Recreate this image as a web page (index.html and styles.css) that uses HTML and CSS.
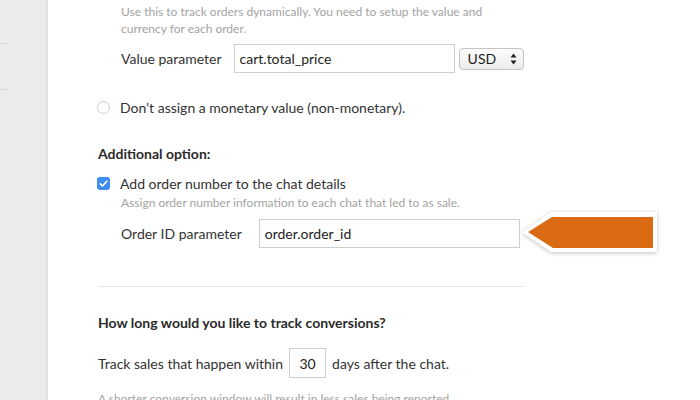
FILE: index.html
```html
<!DOCTYPE html>
<html>
<head>
<meta charset="utf-8">
<link rel="stylesheet" href="styles.css">
</head>
<body>
<div class="page">
  <aside class="sidebar">
    <div class="side-line first"></div>
    <div class="side-line second"></div>
  </aside>
  <main class="main">
    <div class="content">
      <p class="help indent">Use this to track orders dynamically. You need to setup the value and<br>currency for each order.</p>
      <div class="field-row indent value-row">
        <span class="label">Value parameter</span>
        <span class="text-input value-input">cart.total_price</span>
        <span class="select">USD<svg class="select-arrows" width="7" height="12" viewBox="0 0 7 12"><path d="M3.5 0.5 L6.5 4.5 L0.5 4.5 Z M3.5 11.5 L6.5 7.5 L0.5 7.5 Z" fill="#222"/></svg></span>
      </div>
      <div class="option radio-row">
        <span class="radio"></span>
        <span class="option-text">Don’t assign a monetary value (non-monetary).</span>
      </div>
      <h3 class="heading additional">Additional option:</h3>
      <div class="option check-row">
        <span class="checkbox"><svg width="13" height="13" viewBox="0 0 13 13"><path d="M3.3 6.8 L5.5 9 L9.8 4.2" fill="none" stroke="#fff" stroke-width="1.7" stroke-linecap="round" stroke-linejoin="round"/></svg></span>
        <span class="option-text">Add order number to the chat details</span>
      </div>
      <p class="help indent assign">Assign order number information to each chat that led to as sale.</p>
      <div class="field-row indent order-row">
        <span class="label order-label">Order ID parameter</span>
        <span class="text-input order-input">order.order_id</span>
        <svg class="pointer" width="142" height="48" viewBox="0 0 142 48">
          <polygon points="2,22.5 31,2 137,2 137,42 31,42" fill="#fff"/>
          <polygon points="8,22 32,7 133,7 133,38 33,38" fill="#da6a14"/>
        </svg>
      </div>
      <hr class="divider">
      <h3 class="heading how">How long would you like to track conversions?</h3>
      <div class="track-row">
        <span>Track sales that happen within</span>
        <span class="text-input days-input">30</span>
        <span>days after the chat.</span>
      </div>
      <p class="help shorter">A shorter conversion window will result in less sales being reported.</p>
    </div>
  </main>
</div>
</body>
</html>
```
FILE: styles.css
```css
* { box-sizing: border-box; }
html, body { margin: 0; padding: 0; background: #fff; }
body {
  font-family: Lato, "Open Sans", sans-serif;
  color: #333;
  width: 700px;
  height: 400px;
  overflow: hidden;
}
.page {
  display: flex;
  height: 400px;
}
.sidebar {
  width: 48px;
  flex: none;
  background: #ebebeb;
  border-right: 2px solid #e2e2e2;
  padding-top: 43px;
}
.side-line {
  width: 8px;
  height: 1px;
  background: #d9d9d9;
}
.side-line.second { margin-top: 45px; }
.main {
  flex: 1;
  padding-left: 50px;
  padding-top: 3px;
}
.content {
  width: 426px;
}
.indent { padding-left: 23px; }
.help {
  margin: 0;
  font-size: 12px;
  line-height: 17px;
  color: #a3a3a3;
  white-space: nowrap;
}
.field-row {
  display: flex;
  align-items: center;
  position: relative;
  white-space: nowrap;
}
.value-row { margin-top: 7px; }
.label {
  font-size: 14px;
  color: #333;
  flex: none;
}
.text-input {
  display: flex;
  align-items: center;
  flex: none;
  height: 29px;
  border: 1px solid #cfcfcf;
  background: #fff;
  font-size: 14px;
  color: #222;
  padding-left: 5px;
}
.value-input {
  width: 221px;
  margin-left: 12px;
}
.select {
  display: flex;
  align-items: center;
  justify-content: space-between;
  flex: none;
  width: 65px;
  height: 22px;
  margin-left: 4px;
  padding: 0 6px 0 8px;
  border: 1px solid #c4c4c4;
  border-radius: 4px;
  background: linear-gradient(#fdfdfd, #ececec);
  font-size: 14px;
  color: #222;
}
.option {
  display: flex;
  align-items: center;
  height: 20px;
  white-space: nowrap;
}
.option-text {
  font-size: 14px;
  color: #333;
  margin-left: 10px;
}
.radio-row { margin-top: 24px; }
.radio {
  width: 13px;
  height: 13px;
  border: 1px solid #cdcdcd;
  border-radius: 50%;
  background: #fff;
  margin-left: -1px;
}
.heading {
  margin: 0;
  font-size: 14px;
  line-height: 20px;
  font-weight: 700;
  color: #2b2b2b;
  white-space: nowrap;
}
.additional { margin-top: 27px; }
.check-row { margin-top: 9px; }
.checkbox {
  width: 13px;
  height: 13px;
  border-radius: 3px;
  background: #3d8ef0;
  display: flex;
  margin-left: -1px;
}
.assign { margin-top: 1px; }
.order-row { margin-top: 8px; }
.order-input {
  width: 261px;
  margin-left: 17px;
}
.pointer {
  position: absolute;
  left: 422px;
  top: -9px;
  filter: drop-shadow(0 1px 2px rgba(0,0,0,0.25));
}
.divider {
  margin: 38px 0 0;
  border: 0;
  border-top: 1px solid #e6e6e6;
  height: 0;
}
.how { margin-top: 26px; }
.track-row {
  display: flex;
  align-items: center;
  margin-top: 15px;
  font-size: 14px;
  color: #333;
  white-space: nowrap;
}
.days-input {
  width: 37px;
  height: 30px;
  justify-content: center;
  padding-left: 0;
  margin: 0 6px;
}
.shorter { margin-top: 12px; }
```
